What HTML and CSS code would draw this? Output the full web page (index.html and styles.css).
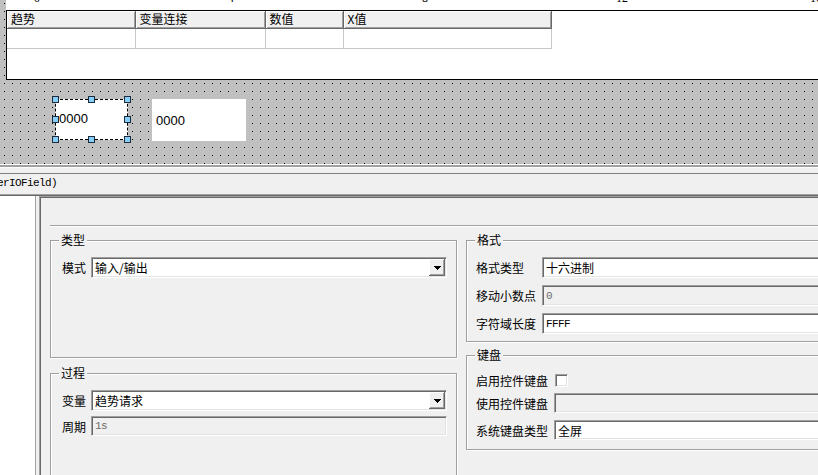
FILE: index.html
```html
<!DOCTYPE html>
<html lang="zh">
<head>
    <meta charset="UTF-8">
    <title>IO域属性</title>
    <link rel="stylesheet" href="styles.css">
</head>
<body>
<div class="design">
    <div class="paper">
        <div class="ruler"><span>0</span><span>4</span><span>8</span><span>12</span><span>16</span></div>
        <div class="screen">
            <table class="trend">
                <tr>
                    <th class="c1">趋势</th>
                    <th class="c2">变量连接</th>
                    <th class="c3">数值</th>
                    <th class="c4">X值</th>
                </tr>
                <tr><td></td><td></td><td></td><td></td></tr>
            </table>
        </div>
    </div>
    <!-- 画布上的两个IO域 -->
    <div class="io io-sel">0000
        <i class="handle h-tl"></i><i class="handle h-tc"></i><i class="handle h-tr"></i>
        <i class="handle h-ml"></i><i class="handle h-mr"></i>
        <i class="handle h-bl"></i><i class="handle h-bc"></i><i class="handle h-br"></i>
    </div>
    <div class="io io-plain">0000</div>
</div>
<div class="split"></div>
<div class="caption">erIOField)</div>
<div class="props">
    <div class="tree"></div>
    <div class="props-body">
        <div class="hr"></div>
        <div class="cols">
            <div class="col-l">
                <div class="group g-type">
                    <span class="legend">类型</span>
                    <div class="row">
                        <label class="lbl-2">模式</label>
                        <div class="field combo"><span>输入/输出</span><b class="drop"><svg width="7" height="4" viewBox="0 0 7 4"><path d="M0 0h7v1H0zM1 1h5v1H1zM2 2h3v1H2zM3 3h1v1H3z"/></svg></b></div>
                    </div>
                </div>
                <div class="group g-proc">
                    <span class="legend">过程</span>
                    <div class="row">
                        <label class="lbl-2">变量</label>
                        <div class="field combo"><span>趋势请求</span><b class="drop"><svg width="7" height="4" viewBox="0 0 7 4"><path d="M0 0h7v1H0zM1 1h5v1H1zM2 2h3v1H2zM3 3h1v1H3z"/></svg></b></div>
                    </div>
                    <div class="row row-s">
                        <label class="lbl-2">周期</label>
                        <div class="field off mono">1s</div>
                    </div>
                </div>
            </div>
            <div class="col-r">
                <div class="group g-fmt">
                    <span class="legend">格式</span>
                    <div class="row">
                        <label class="lbl-w">格式类型</label>
                        <div class="field">十六进制</div>
                    </div>
                    <div class="row">
                        <label class="lbl-w">移动小数点</label>
                        <div class="field off mono">0</div>
                    </div>
                    <div class="row">
                        <label class="lbl-w">字符域长度</label>
                        <div class="field mono">FFFF</div>
                    </div>
                </div>
                <div class="group g-key">
                    <span class="legend">键盘</span>
                    <div class="row">
                        <label class="lbl-k">启用控件键盘</label>
                        <span class="check"></span>
                    </div>
                    <div class="row row-a">
                        <label class="lbl-k">使用控件键盘</label>
                        <div class="field off"></div>
                    </div>
                    <div class="row row-b">
                        <label class="lbl-k">系统键盘类型</label>
                        <div class="field">全屏</div>
                    </div>
                </div>
            </div>
        </div>
    </div>
</div>
</body>
</html>
```

FILE: styles.css
```css
*{
    margin:0;
    padding:0;
    box-sizing:border-box;
}
body{
    width:818px;
    height:475px;
    overflow:hidden;
    background:#f0f0f0;
    color:#000;
    font:12px "Noto Sans CJK SC", sans-serif;
    display:flex;
    flex-direction:column;
}
/* 设计画布 */
.design{
    position:relative;
    flex:none;
    height:164px;
    padding-left:6px;
    background-color:#c0c0c0;
    background-image:conic-gradient(at 1px 1px, transparent 75%, #000 0);
    background-size:8px 8px;
    background-position:4px 3px;
}
.paper{
    width:812px;
}
.ruler{
    height:10px;
    overflow:hidden;
    background:#fff;
    display:flex;
    padding-left:28px;
    font:12px "Liberation Serif", serif;
    line-height:12px;
}
.ruler span{
    flex:none;
    width:194px;
    margin-top:-8px;
}
.screen{
    height:70px;
    background:#fff;
    border:1px solid #000;
    border-right:0;
}
.trend{
    border-collapse:collapse;
    table-layout:fixed;
    width:544px;
}
.trend th{
    height:17px;
    padding-left:4px;
    line-height:16px;
    font-weight:normal;
    text-align:left;
    background:#f0f0f0;
    border-right:1px solid #696969;
    border-bottom:1px solid #696969;
    box-shadow:inset 1px 1px #fff, inset -1px -1px #a0a0a0;
}
.trend .c1{ width:128px; }
.trend .c2{ width:130px; }
.trend .c3{ width:78px; }
.trend .c4{ width:208px; }
.trend td{
    height:20px;
    border-right:1px solid #c8c8c8;
    border-bottom:1px solid #c8c8c8;
}
.io{
    position:absolute;
    top:99px;
    display:flex;
    align-items:center;
    background:#fff;
    font:13px "Liberation Sans", sans-serif;
}
.io-sel{
    left:55px;
    width:73px;
    height:41px;
    padding:0 0 2px 3px;
    border:1px dashed #000;
}
.io-plain{
    left:152px;
    width:94px;
    height:42px;
    padding-left:4px;
}
.handle{
    position:absolute;
    width:7px;
    height:7px;
    background:#87cefa;
    border:1px solid #1c2c3c;
}
.h-tl{ left:-4px; top:-4px; }
.h-tc{ left:32px; top:-4px; }
.h-tr{ left:68px; top:-4px; }
.h-ml{ left:-4px; top:16px; }
.h-mr{ left:68px; top:16px; }
.h-bl{ left:-4px; top:36px; }
.h-bc{ left:32px; top:36px; }
.h-br{ left:68px; top:36px; }
/* 分隔条和标题 */
.split{
    flex:none;
    height:10px;
    border-top:1px solid #fff;
    border-bottom:1px solid #808080;
    background:linear-gradient(#a0a0a0 0 2px, #fff 2px 3px, #f0f0f0 3px);
}
.caption{
    flex:none;
    height:21px;
    text-indent:-3px;
    white-space:nowrap;
    font:11px "Liberation Mono", monospace;
    letter-spacing:-0.6px;
    line-height:19px;
    border-bottom:1px solid #a0a0a0;
}
/* 属性面板 */
.props{
    flex:1;
    min-height:0;
    display:flex;
    border-top:1px solid #696969;
}
.tree{
    flex:none;
    width:36px;
    background:#fff;
    border-right:1px solid #a0a0a0;
}
.props-body{
    flex:1;
    min-width:0;
    overflow:hidden;
    margin-left:3px;
    padding:28px 0 0 10px;
    border-top:1px solid #a0a0a0;
    border-left:1px solid #a0a0a0;
    box-shadow:inset 1px 1px #696969;
}
.hr{
    height:2px;
    border-top:1px solid #a0a0a0;
    border-bottom:1px solid #fff;
}
.cols{
    display:flex;
    gap:9px;
    margin-top:13px;
}
.col-l{
    flex:none;
    width:407px;
    display:flex;
    flex-direction:column;
    gap:15px;
}
.col-r{
    flex:none;
    width:420px;
    display:flex;
    flex-direction:column;
    gap:13px;
}
.group{
    position:relative;
    border:1px solid #a0a0a0;
    box-shadow:inset 1px 1px #fff, 1px 1px #fff;
}
.legend{
    position:absolute;
    top:-8px;
    left:8px;
    padding:0 2px;
    line-height:14px;
    background:#f0f0f0;
}
.g-type{
    height:118px;
    padding:16px 9px 0 11px;
}
.g-proc{
    height:140px;
    padding:16px 9px 0 11px;
}
.g-fmt{
    height:102px;
    padding:16px 9px 0 9px;
    display:flex;
    flex-direction:column;
    gap:7px;
}
.g-key{
    height:95px;
    padding:14px 9px 0 9px;
}
.row{
    display:flex;
    align-items:center;
    height:21px;
}
.row-s{ margin-top:5px; height:20px; }
.row-a{ margin-top:2px; height:20px; }
.row-b{ margin-top:7px; height:20px; }
label{
    flex:none;
    white-space:nowrap;
}
.lbl-2{ width:29px; }
.lbl-w{ width:66px; }
.lbl-k{ width:78px; }
.field{
    flex:1;
    height:100%;
    display:flex;
    align-items:center;
    padding:0 3px;
    white-space:nowrap;
    background:#fff;
    border:1px solid;
    border-color:#a0a0a0 #fff #fff #a0a0a0;
    box-shadow:inset 1px 1px #696969, inset -1px -1px #e3e3e3;
}
.field.off{
    background:#f0f0f0;
    color:#6d6d6d;
}
.mono{
    font:11px "Liberation Mono", monospace;
    letter-spacing:-0.6px;
}
.combo{
    padding:1px 1px 1px 3px;
}
.drop{
    margin-left:auto;
    width:16px;
    height:17px;
    display:flex;
    align-items:center;
    justify-content:center;
    background:#f0f0f0;
    box-shadow:inset -1px -1px #696969, inset 1px 1px #fff, inset -2px -2px #a0a0a0;
}
.drop svg{
    display:block;
}
.check{
    width:13px;
    height:13px;
    margin-left:1px;
    background:#fff;
    border:1px solid;
    border-color:#a0a0a0 #fff #fff #a0a0a0;
    box-shadow:inset 1px 1px #696969, inset -1px -1px #e3e3e3;
}
```
